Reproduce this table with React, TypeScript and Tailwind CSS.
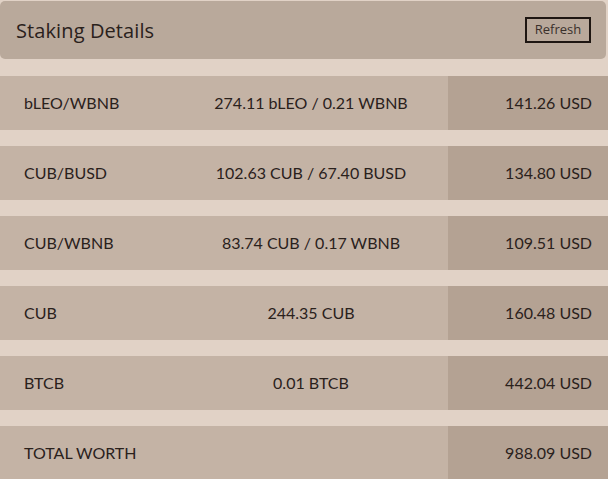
const ROWS = [
  { name: "bLEO/WBNB", amount: "274.11 bLEO / 0.21 WBNB", usd: "141.26 USD" },
  { name: "CUB/BUSD", amount: "102.63 CUB / 67.40 BUSD", usd: "134.80 USD" },
  { name: "CUB/WBNB", amount: "83.74 CUB / 0.17 WBNB", usd: "109.51 USD" },
  { name: "CUB", amount: "244.35 CUB", usd: "160.48 USD" },
  { name: "BTCB", amount: "0.01 BTCB", usd: "442.04 USD" },
  { name: "TOTAL WORTH", amount: "", usd: "988.09 USD" },
];

export default function App() {
  return (
    <div className="h-[479px] w-[608px] overflow-hidden bg-[#e1d2c6] pt-px font-['Lato','Open_Sans',sans-serif] text-[#2a211c]">
      <div className="flex h-[58px] w-[606px] items-center justify-between rounded-[5px] bg-[#b9a99b] pl-4 pr-[15px]">
        <h2 className="pt-[2px] font-['Open_Sans',sans-serif] text-[20px] font-medium tracking-[0.1px]">
          Staking Details
        </h2>
        <button className="h-[26px] w-[66px] border-2 border-[#1e1612] font-['Open_Sans',sans-serif] text-[13px] text-[#3a302b]">
          Refresh
        </button>
      </div>
      <div className="mt-[17px] flex flex-col gap-4">
        {ROWS.map((row) => (
          <div
            key={row.name}
            className="grid h-[54px] grid-cols-[174px_274px_160px] items-stretch text-[16px]"
          >
            <div className="flex items-center bg-[#c4b3a5] pl-6">{row.name}</div>
            <div className="flex items-center justify-center bg-[#c4b3a5]">{row.amount}</div>
            <div className="flex items-center justify-end bg-[#b4a293] pr-4">{row.usd}</div>
          </div>
        ))}
      </div>
    </div>
  );
}
